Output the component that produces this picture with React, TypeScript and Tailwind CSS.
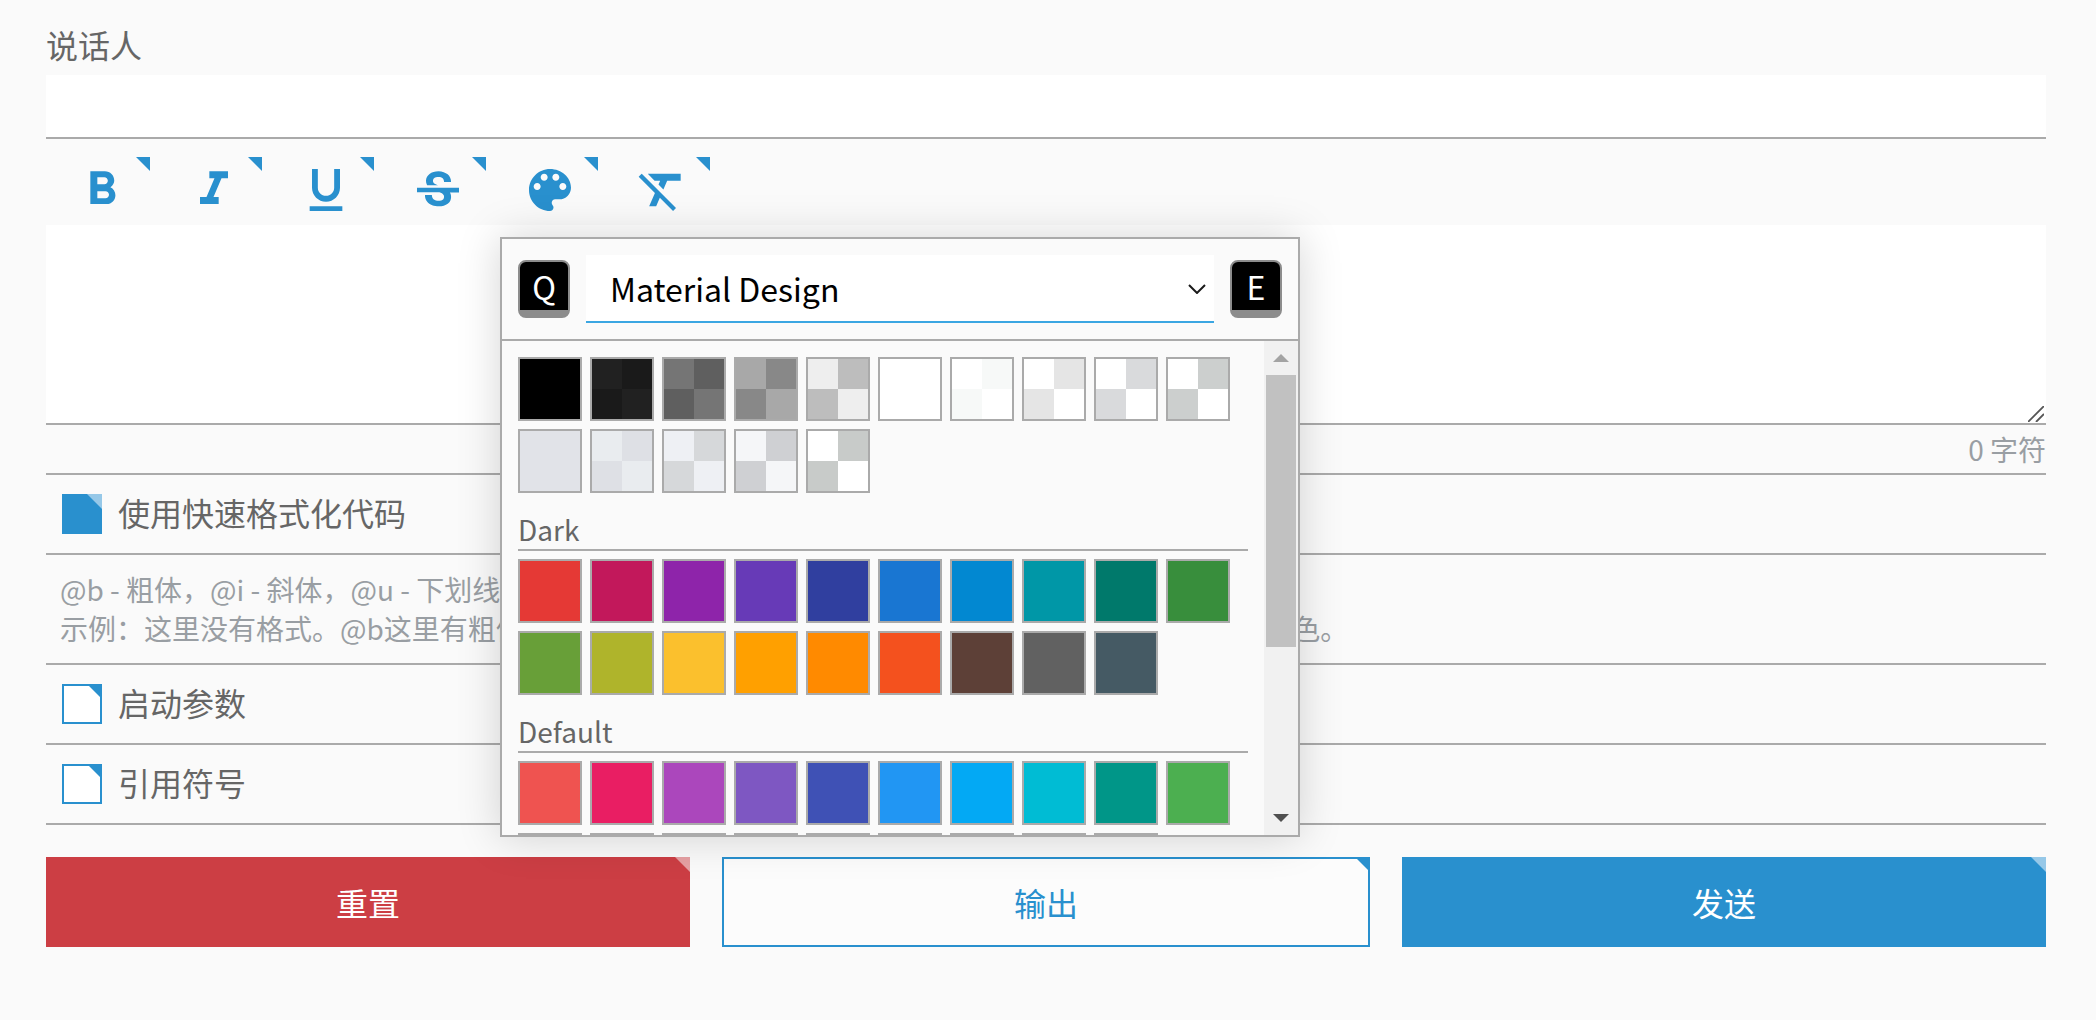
import type { ReactNode } from 'react'

const toolbarIcons = [
  { name: 'bold', d: 'M15.6 10.79c.97-.67 1.65-1.77 1.65-2.79 0-2.26-1.75-4-4-4H7v14h7.04c2.09 0 3.71-1.7 3.71-3.79 0-1.52-.86-2.82-2.15-3.42zM10 6.5h3c.83 0 1.5.67 1.5 1.5s-.67 1.5-1.5 1.5h-3v-3zm3.5 9H10v-3h3.5c.83 0 1.5.67 1.5 1.5s-.67 1.5-1.5 1.5z' },
  { name: 'italic', d: 'M10 4v3h2.21l-3.42 8H6v3h8v-3h-2.21l3.42-8H18V4z' },
  { name: 'underline', d: 'M12 17c3.31 0 6-2.69 6-6V3h-2.5v8c0 1.93-1.57 3.5-3.5 3.5S8.5 12.93 8.5 11V3H6v8c0 3.31 2.69 6 6 6zm-7 2v2h14v-2H5z' },
  { name: 'strike', d: 'M7.24 9.75c-.26-.48-.39-1.03-.39-1.67 0-.61.13-1.16.4-1.67.26-.5.63-.93 1.11-1.29.48-.35 1.05-.63 1.7-.83.66-.19 1.39-.29 2.18-.29.81 0 1.54.11 2.21.34.66.22 1.23.54 1.69.94.47.4.83.88 1.08 1.43.25.55.38 1.15.38 1.81h-3.01c0-.31-.05-.59-.15-.85-.09-.27-.24-.49-.44-.68-.2-.19-.45-.33-.75-.44-.3-.1-.66-.16-1.06-.16-.39 0-.74.04-1.03.13-.29.09-.53.21-.72.36-.19.16-.34.34-.44.55-.1.21-.15.43-.15.66 0 .48.25.88.74 1.21.38.25.77.48 1.41.7H7.39c-.05-.08-.11-.17-.15-.25zM21 13v-2H3v2h9.62c.18.07.4.14.55.2.37.17.66.34.87.51.21.17.35.36.43.57.07.2.11.43.11.69 0 .23-.05.45-.14.66-.09.2-.23.38-.42.53-.19.15-.42.26-.71.35-.29.08-.63.13-1.01.13-.43 0-.83-.04-1.18-.13s-.66-.23-.91-.42c-.25-.19-.45-.44-.59-.75-.14-.31-.25-.76-.25-1.21H6.4c0 .55.08 1.13.24 1.58.16.45.37.85.65 1.21.28.35.6.66.98.92.37.26.78.48 1.22.65.44.17.9.3 1.38.39.48.08.96.13 1.44.13.8 0 1.53-.09 2.18-.28s1.21-.45 1.67-.79c.46-.34.82-.77 1.07-1.27s.38-1.07.38-1.71c0-.6-.1-1.14-.31-1.61-.05-.11-.11-.23-.17-.33H21z' },
  { name: 'palette', d: 'M12 3c-4.97 0-9 4.03-9 9s4.03 9 9 9c.83 0 1.5-.67 1.5-1.5 0-.39-.15-.74-.39-1.01-.23-.26-.38-.61-.38-.99 0-.83.67-1.5 1.5-1.5H16c2.76 0 5-2.24 5-5 0-4.42-4.03-8-9-8zm-5.5 9c-.83 0-1.5-.67-1.5-1.5S5.67 9 6.5 9 8 9.67 8 10.5 7.33 12 6.5 12zm3-4C8.67 8 8 7.33 8 6.5S8.67 5 9.5 5s1.5.67 1.5 1.5S10.33 8 9.5 8zm5 0c-.83 0-1.5-.67-1.5-1.5S13.67 5 14.5 5s1.5.67 1.5 1.5S15.33 8 14.5 8zm3 4c-.83 0-1.5-.67-1.5-1.5S16.67 9 17.5 9s1.5.67 1.5 1.5-.67 1.5-1.5 1.5z' },
  { name: 'clear', d: 'M3.27 5L2 6.27l6.97 6.97L6.5 19h3l1.57-3.66L16.73 21 18 19.73 3.55 5.27 3.27 5zM6 5v.18L8.82 8h2.4l-.72 1.68 2.1 2.1L14.21 8H20V5H6z' },
]

// each swatch is one colour, or two colours laid out as a 2x2 checker
type SwatchColors = { a: string; b?: string }

const neutralSwatches: SwatchColors[] = [
  { a: 'bg-[#000000]' },
  { a: 'bg-[#212121]', b: 'bg-[#1a1a1a]' },
  { a: 'bg-[#757575]', b: 'bg-[#5f5f5f]' },
  { a: 'bg-[#a8a8a8]', b: 'bg-[#888888]' },
  { a: 'bg-[#eeeeee]', b: 'bg-[#bdbdbd]' },
  { a: 'bg-[#ffffff]' },
  { a: 'bg-[#ffffff]', b: 'bg-[#f7f9f8]' },
  { a: 'bg-[#ffffff]', b: 'bg-[#e5e5e5]' },
  { a: 'bg-[#ffffff]', b: 'bg-[#d9dadc]' },
  { a: 'bg-[#ffffff]', b: 'bg-[#cccfce]' },
  { a: 'bg-[#e1e3e8]' },
  { a: 'bg-[#e9ecef]', b: 'bg-[#dee0e5]' },
  { a: 'bg-[#eef0f4]', b: 'bg-[#d6d8da]' },
  { a: 'bg-[#f5f6f8]', b: 'bg-[#cfd0d3]' },
  { a: 'bg-[#ffffff]', b: 'bg-[#c8cbc9]' },
]

const darkSwatches = [
  'bg-[#e53935]', 'bg-[#c2185b]', 'bg-[#8e24aa]', 'bg-[#673ab7]', 'bg-[#303f9f]',
  'bg-[#1976d2]', 'bg-[#0288d1]', 'bg-[#0097a7]', 'bg-[#00796b]', 'bg-[#388e3c]',
  'bg-[#689f38]', 'bg-[#afb42b]', 'bg-[#fbc02d]', 'bg-[#ffa000]', 'bg-[#ff8a00]',
  'bg-[#f4511e]', 'bg-[#5d4037]', 'bg-[#616161]', 'bg-[#455a64]',
]

const defaultSwatches = [
  'bg-[#ef5350]', 'bg-[#e91e63]', 'bg-[#ab47bc]', 'bg-[#7e57c2]', 'bg-[#3f51b5]',
  'bg-[#2196f3]', 'bg-[#03a9f4]', 'bg-[#00bcd4]', 'bg-[#009688]', 'bg-[#4caf50]',
  'bg-[#8bc34a]', 'bg-[#cddc39]', 'bg-[#ffeb3b]', 'bg-[#ffc107]', 'bg-[#ff9800]',
  'bg-[#ff5722]', 'bg-[#795548]', 'bg-[#9e9e9e]', 'bg-[#607d8b]',
]

function Swatch({ a, b }: SwatchColors) {
  if (!b) return <div className={`w-16 h-16 border-2 border-[#aaaaaa] ${a}`} />
  return (
    <div className="w-16 h-16 border-2 border-[#aaaaaa] grid grid-cols-2 grid-rows-2">
      <div className={a} />
      <div className={b} />
      <div className={b} />
      <div className={a} />
    </div>
  )
}

function SwatchGroup({ title, colors }: { title?: string; colors: SwatchColors[] }) {
  return (
    <div className="w-[730px]">
      {title && (
        <div className="mt-[18px] mb-2 h-10 leading-[36px] text-[28px] text-[#666666] border-b-2 border-[#aaaaaa]">
          {title}
        </div>
      )}
      <div className="flex flex-wrap gap-2">
        {colors.map((c, i) => (
          <Swatch key={i} {...c} />
        ))}
      </div>
    </div>
  )
}

function KeyHint({ label }: { label: string }) {
  return (
    <div className="w-[52px] h-[58px] shrink-0 flex items-center justify-center rounded-lg bg-black border-2 border-b-8 border-[#8c8c8c] text-white text-[32px] leading-none">
      {label}
    </div>
  )
}

function ColorPicker() {
  return (
    <div className="absolute left-[500px] top-[237px] w-[800px] h-[600px] flex flex-col bg-[#fafafa] border-2 border-[#aaaaaa] shadow-[0_0_40px_rgba(0,0,0,0.17)]">
      <div className="h-[102px] shrink-0 flex items-center gap-4 px-4 border-b-2 border-[#aaaaaa]">
        <KeyHint label="Q" />
        <div className="relative flex-1">
          <select
            defaultValue="Material Design"
            className="appearance-none block w-full h-[68px] pl-[24px] pr-12 bg-white text-black text-[32px] border-b-2 border-[#3ba6e2] rounded-none outline-none"
          >
            <option>Material Design</option>
          </select>
          <svg viewBox="0 0 18 10" className="absolute right-2 top-[29px] w-[18px] h-[10px] pointer-events-none" aria-hidden>
            <path d="M1 1l8 8 8-8" fill="none" stroke="#1a1a1a" strokeWidth="2" />
          </svg>
        </div>
        <KeyHint label="E" />
      </div>
      <div className="flex-1 min-h-0 flex">
        <div className="flex-1 min-w-0 overflow-hidden pl-4 pt-4">
          <SwatchGroup colors={neutralSwatches} />
          <SwatchGroup title="Dark" colors={darkSwatches.map(a => ({ a }))} />
          <SwatchGroup title="Default" colors={defaultSwatches.map(a => ({ a }))} />
        </div>
        <div className="w-[34px] shrink-0 flex flex-col bg-[#f1f1f1]">
          <div className="h-[34px] shrink-0 flex items-center justify-center">
            <div className="w-0 h-0 border-x-8 border-x-transparent border-b-8 border-b-[#a3a3a3]" />
          </div>
          <div className="h-[272px] mx-0.5 bg-[#c1c1c1]" />
          <div className="flex-1" />
          <div className="h-[34px] shrink-0 flex items-center justify-center">
            <div className="w-0 h-0 border-x-8 border-x-transparent border-t-8 border-t-[#505050]" />
          </div>
        </div>
      </div>
    </div>
  )
}

function Corner({ className }: { className: string }) {
  return <span className={`absolute w-0 h-0 border-l-transparent ${className}`} aria-hidden />
}

function CheckRow({ label, checked }: { label: string; checked?: boolean }) {
  return (
    <div className="h-20 flex items-center gap-4 pl-4 border-b-2 border-[#aaaaaa] text-[32px] text-[#666666]">
      {checked ? (
        <span className="relative w-10 h-10 bg-[#2990ce]">
          <Corner className="top-0 right-0 border-l-[15px] border-t-[15px] border-t-[#96c8e8]" />
        </span>
      ) : (
        <span className="relative w-10 h-10 bg-white border-2 border-[#2990ce]">
          <Corner className="-top-0.5 -right-0.5 border-l-[15px] border-t-[15px] border-t-[#2990ce]" />
        </span>
      )}
      <span className="pb-[5px]">{label}</span>
    </div>
  )
}

function ActionButton({ children, className, corner }: { children: ReactNode; className: string; corner: string }) {
  return (
    <button className={`relative flex-1 box-content text-[32px] flex items-center justify-center ${className}`}>
      <Corner className={corner} />
      {children}
    </button>
  )
}

export default function App() {
  return (
    <div className="relative w-[2096px] h-[1020px] overflow-hidden bg-[#fafafa] pl-[46px] pr-[50px] font-['Noto_Sans_CJK_SC','Noto_Sans',sans-serif]">
      <div className="h-[75px] pt-[22px] text-[32px] leading-[44px] text-[#666666]">说话人</div>
      <input className="block w-full h-16 bg-white border-b-2 border-[#aaaaaa] outline-none" />

      <div className="h-[86px] flex gap-2 pt-[18px]">
        {toolbarIcons.map(icon => (
          <button key={icon.name} className="relative w-[104px] h-[61px] pl-7 pt-[5px]" aria-label={icon.name}>
            <Corner className="top-0 right-0 border-l-[14px] border-t-[14px] border-t-[#2990ce]" />
            <svg viewBox="0 0 24 24" className="w-14 h-14 fill-[#2990ce]" aria-hidden>
              <path d={icon.d} />
            </svg>
          </button>
        ))}
      </div>

      <div className="relative">
        <textarea className="block w-full h-[200px] bg-white border-b-2 border-[#aaaaaa] outline-none resize-none" />
        <svg viewBox="0 0 16 16" className="absolute right-0.5 bottom-[3px] w-4 h-4 pointer-events-none" aria-hidden>
          <path d="M0 16L16 0M8 16l8-8" fill="none" stroke="#555555" strokeWidth="1.8" />
        </svg>
      </div>

      <div className="h-[50px] flex items-center justify-end text-[28px] text-[#999ea3] border-b-2 border-[#aaaaaa]">
        0 字符
      </div>

      <CheckRow label="使用快速格式化代码" checked />

      <div className="h-[110px] pl-[14px] py-[15px] text-[28px] leading-[39px] text-[#999ea3] border-b-2 border-[#aaaaaa] whitespace-nowrap">
        <div>{'@b - 粗体\uFF0C@i - 斜体\uFF0C@u - 下划线\uFF0C@s - 删除线\uFF0C@c - 颜色。'}</div>
        <div>{'示例\uFF1A这里没有格式。@b这里有粗体字。@i这里有斜体字。@u这里有下划线。@c#F00这里有点红色。'}</div>
      </div>

      <CheckRow label="启动参数" />
      <CheckRow label="引用符号" />

      <div className="flex gap-8 mt-8 h-[90px]">
        <ActionButton className="bg-[#cc3e44] text-white" corner="top-0 right-0 border-l-[15px] border-t-[15px] border-t-[#e6a0a3]">重置</ActionButton>
        <ActionButton className="border-2 border-[#2990ce] bg-[#fcfcfc] text-[#2990ce]" corner="-top-0.5 -right-0.5 border-l-[15px] border-t-[15px] border-t-[#2990ce]">输出</ActionButton>
        <ActionButton className="bg-[#2990ce] text-white" corner="top-0 right-0 border-l-[15px] border-t-[15px] border-t-[#96c8e8]">发送</ActionButton>
      </div>

      <ColorPicker />
    </div>
  )
}
